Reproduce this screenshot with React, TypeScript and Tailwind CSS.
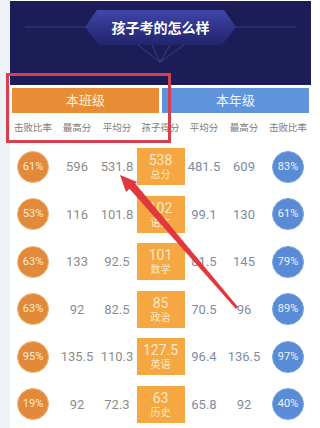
import React from 'react'

type Row = {
  classRate: string
  classMax: string
  classAvg: string
  score: string
  subject: string
  gradeAvg: string
  gradeMax: string
  gradeRate: string
}

const rows: Row[] = [
  { classRate: '61%', classMax: '596', classAvg: '531.8', score: '538', subject: '总分', gradeAvg: '481.5', gradeMax: '609', gradeRate: '83%' },
  { classRate: '53%', classMax: '116', classAvg: '101.8', score: '102', subject: '语文', gradeAvg: '99.1', gradeMax: '130', gradeRate: '61%' },
  { classRate: '63%', classMax: '133', classAvg: '92.5', score: '101', subject: '数学', gradeAvg: '81.5', gradeMax: '145', gradeRate: '79%' },
  { classRate: '63%', classMax: '92', classAvg: '82.5', score: '85', subject: '政治', gradeAvg: '70.5', gradeMax: '96', gradeRate: '89%' },
  { classRate: '95%', classMax: '135.5', classAvg: '110.3', score: '127.5', subject: '英语', gradeAvg: '96.4', gradeMax: '136.5', gradeRate: '97%' },
  { classRate: '19%', classMax: '92', classAvg: '72.3', score: '63', subject: '历史', gradeAvg: '65.8', gradeMax: '92', gradeRate: '40%' },
]

const headers = ['击败比率', '最高分', '平均分', '孩子得分', '平均分', '最高分', '击败比率']

const font = { fontFamily: 'Roboto, "Noto Sans CJK SC", sans-serif' }

const grid = 'grid grid-cols-[44px_44px_36px_51px_36px_44px_44px] px-[1px] w-[301px]'

function Banner() {
  return (
    <svg className="absolute inset-0" width="301" height="84" viewBox="0 0 301 84">
      <defs>
        <linearGradient id="bn" x1="0" y1="0" x2="0" y2="1">
          <stop offset="0" stopColor="#4247ad" />
          <stop offset="1" stopColor="#272b7c" stopOpacity="0.6" />
        </linearGradient>
      </defs>
      <line x1="15" y1="26" x2="78" y2="26" stroke="#5a63c0" strokeOpacity="0.45" strokeWidth="1" />
      <line x1="224" y1="26" x2="286" y2="26" stroke="#5a63c0" strokeOpacity="0.45" strokeWidth="1" />
      <polygon points="87,9 214,9 226,26 212,44 89,44 75,26" fill="url(#bn)" />
      <g stroke="#6a72cc" strokeOpacity="0.45" strokeWidth="0.8">
        <line x1="128" y1="44" x2="150" y2="61" />
        <line x1="142" y1="44" x2="150" y2="61" />
        <line x1="160" y1="44" x2="150" y2="61" />
        <line x1="174" y1="44" x2="150" y2="61" />
      </g>
    </svg>
  )
}

export default function App() {
  return (
    <div className="relative w-[320px] h-[428px] overflow-hidden bg-[#eef1f6]" style={font}>
      <div className="ml-[10px] w-[310px] h-full bg-white pt-[1px]">
        <div className="relative w-[301px] h-[84px] bg-[#1c1d57]">
          <Banner />
          <div className="relative pt-[17px] text-center text-[14px] font-semibold text-white leading-[20px]">
            孩子考的怎么样
          </div>
        </div>

        <div className="flex gap-[3px] px-[2px] mt-[3px] w-[301px]">
          <div className="flex-1 h-[25px] bg-[#e98c36] flex items-center justify-center text-[13px] text-[#fdf0df]">
            本班级
          </div>
          <div className="flex-1 h-[25px] bg-[#5f94dc] flex items-center justify-center text-[13px] text-[#eef4fd]">
            本年级
          </div>
        </div>

        <div className={`${grid} h-[30px] items-center`}>
          {headers.map((h, i) => (
            <div key={i} className="text-center text-[9.5px] text-[#7a7a7a] whitespace-nowrap">
              {h}
            </div>
          ))}
        </div>

        {rows.map((r) => (
          <div key={r.subject} className={`${grid} h-[47.5px] items-center`}>
            <div className="flex justify-center">
              <div className="w-[32px] h-[32px] rounded-full bg-[#e2893a] border border-[#f0b57a] flex items-center justify-center text-[11px] text-[#fdeedd]">
                {r.classRate}
              </div>
            </div>
            <div className="text-center text-[13px] text-[#8c8c8c]">{r.classMax}</div>
            <div className="text-center text-[13px] text-[#8c8c8c]">{r.classAvg}</div>
            <div className="flex justify-center">
              <div className="w-[48px] h-[37px] bg-[#f5a742] flex flex-col items-center justify-center leading-none">
                <span className="text-[14px] text-[#fde8c6]">{r.score}</span>
                <span className="text-[10px] text-[#fde8c6] mt-[3px]">{r.subject}</span>
              </div>
            </div>
            <div className="text-center text-[13px] text-[#7e8ba2]">{r.gradeAvg}</div>
            <div className="text-center text-[13px] text-[#7e8ba2]">{r.gradeMax}</div>
            <div className="flex justify-center">
              <div className="w-[32px] h-[32px] rounded-full bg-[#5a8bd6] border border-[#7ca6e4] flex items-center justify-center text-[11px] text-[#eef4fd]">
                {r.gradeRate}
              </div>
            </div>
          </div>
        ))}
      </div>

      {/* annotation frame */}
      <div className="absolute left-[6px] top-[73px] w-[165px] h-[70px] border-[3px] border-[#d63f4f]" />

      {/* annotation arrow */}
      <svg className="absolute inset-0 pointer-events-none" width="320" height="428" viewBox="0 0 320 428">
        <polygon points="238,307 236,309 127.5,186.5 133.5,181.5" fill="#e2373c" />
        <polygon points="120,175 137,182 126,192" fill="#e2373c" />
      </svg>
    </div>
  )
}
